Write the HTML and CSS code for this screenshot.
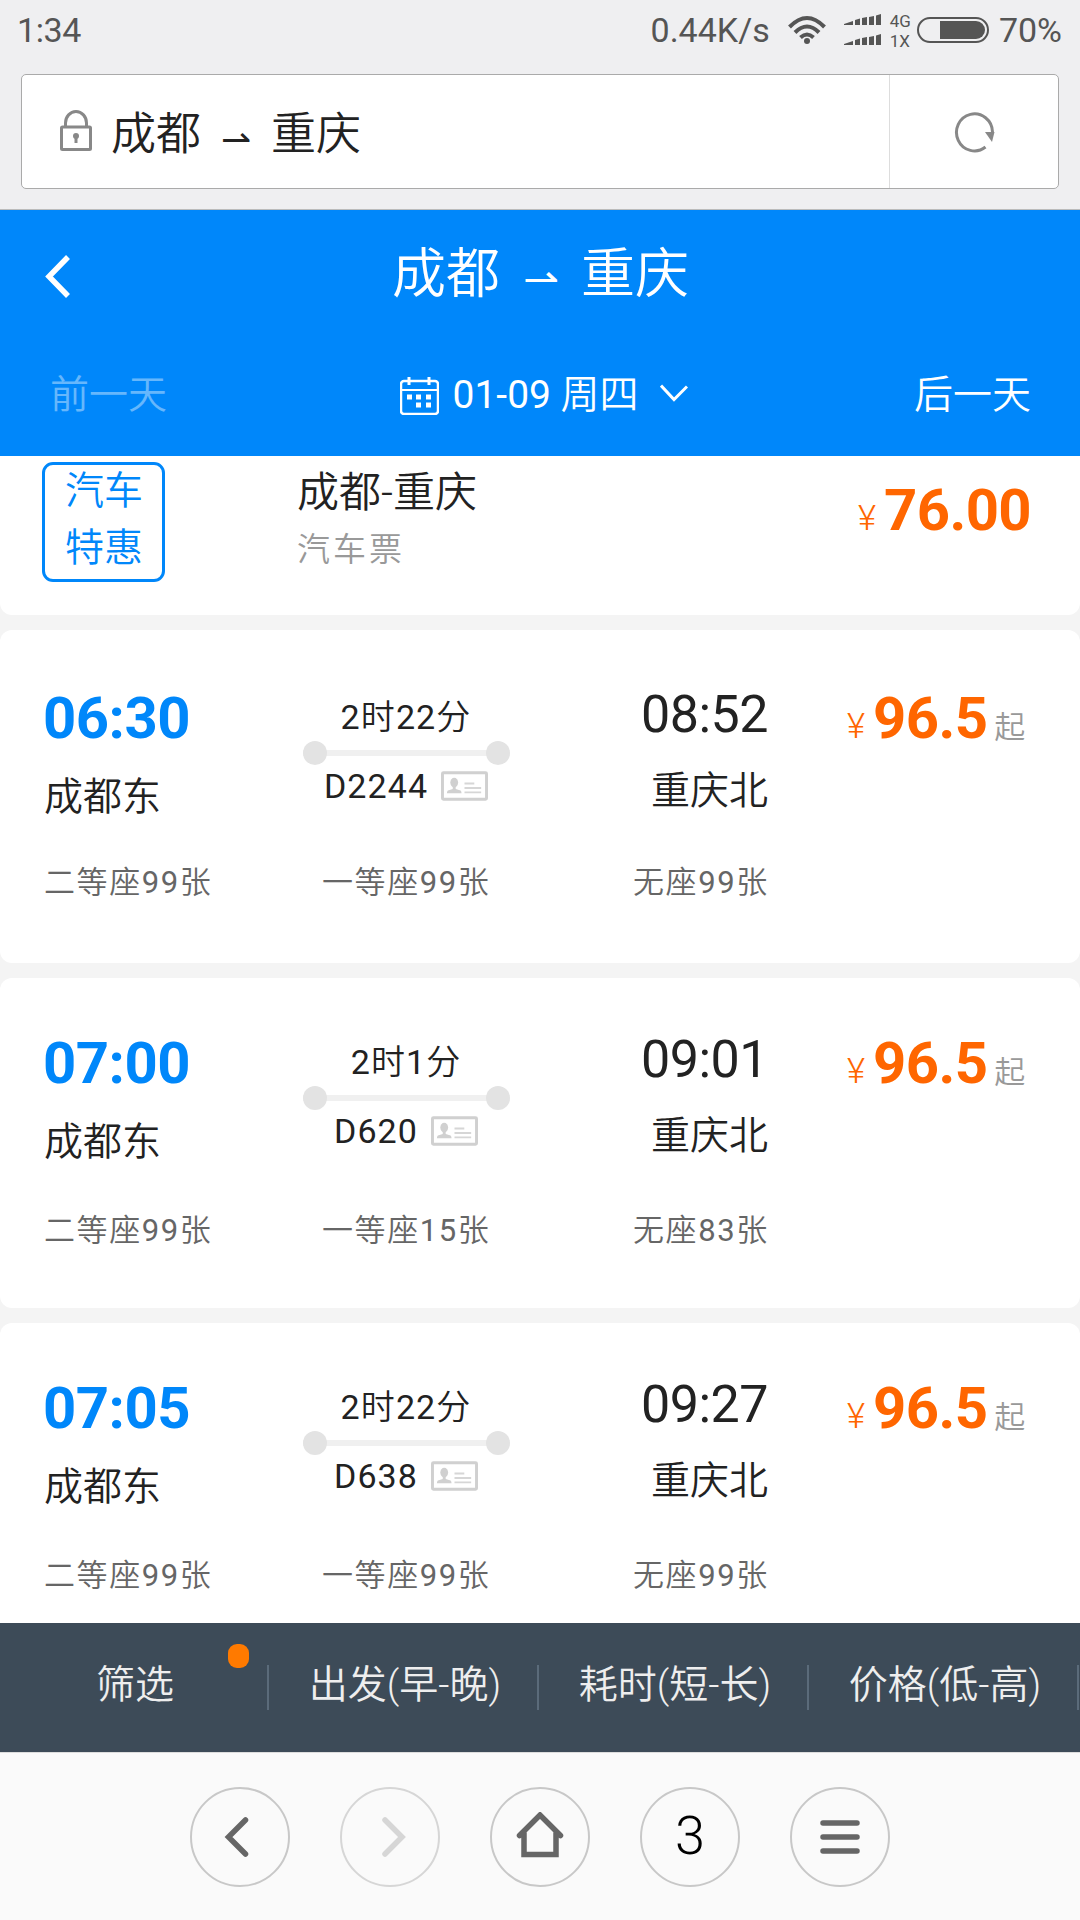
FILE: index.html
```html
<!DOCTYPE html>
<html lang="zh-CN">
<head>
  <meta charset="UTF-8" />
  <meta name="viewport" content="width=device-width, initial-scale=1" />
  <title>成都 ⇀ 重庆</title>
  <link rel="stylesheet" href="styles.css">
</head>
<body>

  <svg class="sprite" aria-hidden="true">
    <symbol id="id-card" viewBox="0 0 48 30">
      <rect x="1.5" y="1.5" width="45" height="27" rx="1" fill="#fff" stroke="#d0d0d0" stroke-width="3"/>
      <ellipse cx="13.5" cy="11.5" rx="4" ry="4.8" fill="#d0d0d0"/>
      <path d="M12 15h3v3l5 1.500q1 1 1 3H6q0-2 1-3l5-1.500z" fill="#d0d0d0"/>
      <path d="M24 12.500h10M24 17h17M24 21.500h17" stroke="#d6d6d6" stroke-width="2"/>
    </symbol>
  </svg>

  <!-- Status bar -->
  <div class="status">
    <span class="clock">1:34</span>
    <span class="speed">0.44K/s</span>
    <svg class="wifi" width="38" height="28" viewBox="0 0 38 28" fill="none" stroke="#555" stroke-width="4">
      <path d="M1.500 11Q19-7 36.500 11M7 16.500Q19 4.500 31 16.500M12.500 21.500Q19 15.500 25.500 21.500"/>
      <circle cx="19" cy="25" r="3" fill="#555" stroke="none"/>
    </svg>
    <svg class="signal" width="38" height="32" viewBox="0 0 38 32" fill="#555">
      <path d="M0 10l9-3v4H0zM11 6l5-1.500V11h-5zM18 4l5-1v8h-5zM25 3l5-1v9h-5zM32 1.500L37 0v11h-5z"/>
      <path d="M0 30l9-3v4H0zM11 26l5-1.500V31h-5zM18 24l5-1v8h-5zM25 23l5-1v9h-5zM32 21.500l5-1.500v11h-5z"/>
    </svg>
    <span class="network"><span>4G</span><span>1X</span></span>
    <span class="battery"><span class="battery-level"></span></span>
    <span class="percent">70%</span>
  </div>

  <div class="address">
    <div class="address-box">
      <div class="address-title">
        <svg class="lock" width="32" height="41" viewBox="0 0 32 41" fill="none" stroke="#888" stroke-width="3">
          <path d="M5.500 16V13a10.500 11.500 0 0 1 21 0V16"/>
          <rect x="1.500" y="17" width="29" height="22.500" rx="1"/>
          <circle cx="16" cy="26" r="3" fill="#888" stroke="none"/>
          <path d="M16 26v7"/>
        </svg>
        <span>成都</span><span class="arrow">⇀</span><span>重庆</span>
      </div>
      <div class="reload">
        <svg width="42" height="42" viewBox="0 0 42 42">
          <path d="M38.500 21A18 18.500 0 1 0 31.500 36" fill="none" stroke="#888" stroke-width="3"/>
          <path d="M31 21h9.500l-2.500 10z" fill="#888"/>
        </svg>
      </div>
    </div>
  </div>

  <header class="header">
    <div class="header-top">
      <svg class="back" width="25" height="43" viewBox="0 0 25 43" fill="none" stroke="#fff" stroke-width="5.500">
        <path d="M23 2L4 21.500 23 41"/>
      </svg>
      <h1 class="route"><span>成都</span><span class="arrow">⇀</span><span>重庆</span></h1>
    </div>
    <div class="days">
      <span class="prev-day">前一天</span>
      <div class="date">
        <svg class="calendar" width="39" height="38" viewBox="0 0 39 38" fill="none" stroke="#fff" stroke-width="2">
          <rect x="1" y="4" width="37" height="33" rx="3" stroke-width="2.500"/>
          <path d="M1 13h37"/>
          <path d="M9 0v8M29 0v8" stroke-width="3"/>
          <path d="M7 20h5M16 20h5M26 20h5M16 28h5M26 28h5" stroke-width="5"/>
        </svg>
        <span class="date-text"><span class="num">01-09</span> 周四</span>
        <svg class="chevron" width="28" height="18" viewBox="0 0 28 18" fill="none" stroke="#fff" stroke-width="3">
          <path d="M1 1.500l13 14 13-13"/>
        </svg>
      </div>
      <span class="next-day">后一天</span>
    </div>
  </header>

  <main class="list">
    <section class="card promo">
      <div class="promo-tag"><span>汽车<br>特惠</span></div>
      <div class="promo-info">
        <p class="promo-route">成都-重庆</p>
        <p class="promo-type">汽车票</p>
      </div>
      <div class="price"><span class="yen">¥</span><span class="amount">76.00</span></div>
    </section>

    <section class="card train train-first">
      <div class="train-main">
        <div class="from"><p class="time">06:30</p><p class="station">成都东</p></div>
        <div class="trip">
          <p class="duration"><span class="num">2</span>时<span class="num">22</span>分</p>
          <div class="line"><i></i><i></i></div>
          <p class="number">D2244<svg class="id-card"><use href="#id-card"/></svg></p>
        </div>
        <div class="to"><p class="time">08:52</p><p class="station">重庆北</p></div>
        <div class="price"><span class="yen">¥</span><span class="amount">96.5</span><span class="up">起</span></div>
      </div>
      <div class="seats">
        <span>二等座<b class="num">99</b>张</span>
        <span>一等座<b class="num">99</b>张</span>
        <span>无座<b class="num">99</b>张</span>
      </div>
    </section>

    <section class="card train">
      <div class="train-main">
        <div class="from"><p class="time">07:00</p><p class="station">成都东</p></div>
        <div class="trip">
          <p class="duration"><span class="num">2</span>时<span class="num">1</span>分</p>
          <div class="line"><i></i><i></i></div>
          <p class="number">D620<svg class="id-card"><use href="#id-card"/></svg></p>
        </div>
        <div class="to"><p class="time">09:01</p><p class="station">重庆北</p></div>
        <div class="price"><span class="yen">¥</span><span class="amount">96.5</span><span class="up">起</span></div>
      </div>
      <div class="seats">
        <span>二等座<b class="num">99</b>张</span>
        <span>一等座<b class="num">15</b>张</span>
        <span>无座<b class="num">83</b>张</span>
      </div>
    </section>

    <section class="card train">
      <div class="train-main">
        <div class="from"><p class="time">07:05</p><p class="station">成都东</p></div>
        <div class="trip">
          <p class="duration"><span class="num">2</span>时<span class="num">22</span>分</p>
          <div class="line"><i></i><i></i></div>
          <p class="number">D638<svg class="id-card"><use href="#id-card"/></svg></p>
        </div>
        <div class="to"><p class="time">09:27</p><p class="station">重庆北</p></div>
        <div class="price"><span class="yen">¥</span><span class="amount">96.5</span><span class="up">起</span></div>
      </div>
      <div class="seats">
        <span>二等座<b class="num">99</b>张</span>
        <span>一等座<b class="num">99</b>张</span>
        <span>无座<b class="num">99</b>张</span>
      </div>
    </section>
  </main>

  <div class="filters">
    <div class="filter">筛选<i class="dot"></i></div>
    <div class="filter">出发(早-晚)</div>
    <div class="filter">耗时(短-长)</div>
    <div class="filter">价格(低-高)</div>
  </div>

  <nav class="browser-nav">
    <a class="nav-btn">
      <svg width="50" height="50" viewBox="0 0 50 50"><path d="M30.500 8L13.500 25l17 17"/></svg>
    </a>
    <a class="nav-btn disabled">
      <svg width="50" height="50" viewBox="0 0 50 50"><path d="M20 8l17 17-17 17"/></svg>
    </a>
    <a class="nav-btn">
      <svg width="50" height="50" viewBox="0 0 50 50"><path d="M4.500 23.500L25 3l20.500 20.500M9 21v21.500h32V21"/></svg>
    </a>
    <a class="nav-btn tabs">3</a>
    <a class="nav-btn">
      <svg width="50" height="50" viewBox="0 0 50 50"><path d="M8 11h34M8 25h34M8 39h34"/></svg>
    </a>
  </nav>

</body>
</html>
```

FILE: styles.css
```css
* {
  margin: 0;
  padding: 0;
  box-sizing: border-box;
}

body {
  font-family: Roboto, "Noto Sans CJK SC", sans-serif;
  font-weight: 350;
  width: 1080px;
  height: 1920px;
  overflow: hidden;
  display: flex;
  flex-direction: column;
  background: #f4f4f4;
  color: #222;
  white-space: nowrap;
}

svg {
  display: block;
  flex: none;
}

.sprite {
  position: absolute;
  width: 0;
  height: 0;
}

.num {
  font-weight: 400;
}

/* Status bar */
.status {
  height: 74px;
  flex: none;
  display: flex;
  align-items: flex-start;
  padding: 0 18px 0 17px;
  background: #efeff1;
  color: #555;
  font-size: 34px;
  font-weight: 400;
  line-height: 61px;
}

.clock {
  letter-spacing: -.4px;
}

.speed {
  margin-left: auto;
}

.wifi {
  margin: 16px 18px 0 18px;
}

.signal {
  margin-top: 14px;
}

.network {
  display: flex;
  flex-direction: column;
  margin: 11px 6px 0 8px;
  font-size: 17px;
  line-height: 20px;
}

.battery {
  width: 72px;
  height: 26px;
  margin: 17px 10px 0 0;
  padding: 2px;
  border: 2px solid #555;
  border-radius: 13px;
  display: flex;
  justify-content: flex-end;
}

.battery-level {
  width: 45px;
  background: #555;
  border-radius: 0 9px 9px 0;
}

/* Address bar */
.address {
  height: 136px;
  flex: none;
  padding: 0 21px;
  background: #efeff1;
  border-bottom: 1px solid #bbb;
}

.address-box {
  height: 115px;
  display: flex;
  background: #fff;
  border: 1px solid #aaa;
  border-radius: 5px;
}

.address-title {
  flex: 1;
  display: flex;
  align-items: center;
  padding: 0 0 2px 38px;
  font-size: 45px;
}

.lock {
  margin-right: 19px;
}

.arrow {
  text-align: center;
}

.address-title .arrow {
  width: 70px;
  padding-top: 18px;
  font-size: 36px;
  font-weight: 300;
}

.reload {
  width: 169px;
  display: flex;
  align-items: center;
  justify-content: center;
  padding-left: 2px;
  border-left: 1px solid #ddd;
}

/* Blue header */
.header {
  height: 246px;
  flex: none;
  background: #0087fa;
  color: #fff;
}

.header-top {
  height: 132px;
  display: flex;
  align-items: center;
  padding-left: 45px;
}

.route {
  flex: 1;
  display: flex;
  align-items: center;
  justify-content: center;
  margin-right: 69px;
  padding-bottom: 14px;
  font-size: 54px;
  font-weight: 350;
}

.route .arrow {
  width: 81px;
  padding-top: 20px;
  font-size: 43px;
  font-weight: 300;
}

.days {
  height: 98px;
  display: flex;
  align-items: center;
  justify-content: space-between;
  padding: 0 49px 0 50px;
  font-size: 39px;
}

.prev-day {
  opacity: .4;
}

.date {
  display: flex;
  align-items: center;
  margin-left: 7px;
}

.calendar {
  margin-top: 10px;
}

.chevron {
  margin-top: 4px;
}

.date-text {
  margin: 0 22px 0 14px;
}

/* List */
.list {
  flex: 1;
  min-height: 0;
  overflow: hidden;
  display: flex;
  flex-direction: column;
  gap: 15px;
}

.card {
  flex: none;
  background: #fff;
  border-radius: 12px;
}

.promo {
  height: 159px;
  display: flex;
  align-items: flex-start;
  padding: 6px 49px 0 42px;
  border-radius: 0 0 12px 12px;
}

.promo-tag {
  width: 123px;
  height: 120px;
  border: 3px solid #0087fa;
  border-radius: 11px;
  color: #0087fa;
  font-size: 39px;
  line-height: 57px;
  text-align: center;
}

.promo-tag span {
  display: block;
  margin: -2px 0 0 1px;
}

.promo-info {
  margin: 1px 0 0 132px;
}

.promo-route {
  font-size: 42px;
  line-height: 60px;
}

.promo-type {
  font-size: 33px;
  line-height: 54px;
  letter-spacing: 3px;
  color: #999;
}

.price {
  color: #ff6600;
  display: flex;
  align-items: baseline;
  line-height: 70px;
}

.promo .price {
  margin: 13px 0 0 auto;
}

.yen {
  font-size: 35px;
  font-weight: 350;
  margin-right: 8px;
}

.amount {
  font-size: 58px;
  font-weight: 700;
  letter-spacing: -.6px;
}

.up {
  margin-left: 7px;
  font-size: 31px;
  color: #999;
}

.train {
  height: 330px;
  padding: 50px 0 0 44px;
}

.train-first {
  height: 333px;
  padding-top: 53px;
}

.train-main {
  height: 181px;
  display: grid;
  grid-template-columns: 259px 207px 258px 1fr;
}

.train-first .train-main {
  height: 178px;
}

.time {
  font-size: 52px;
  line-height: 63px;
  font-weight: 400;
  letter-spacing: -.5px;
}

.from .time {
  margin-left: -1px;
  font-size: 58px;
  line-height: 70px;
  font-weight: 700;
  letter-spacing: -.5px;
  color: #0087fa;
}

.station {
  font-size: 39px;
  line-height: 60px;
}

.from .station {
  margin-top: 14px;
}

.to {
  text-align: right;
}

.to .station {
  margin-top: 15px;
}

.trip {
  font-size: 34px;
  letter-spacing: 1.1px;
  text-align: center;
}

.duration {
  margin: 14px 1px 0 0;
  line-height: 40px;
}

.line {
  height: 24px;
  margin-top: 4px;
  display: flex;
  justify-content: space-between;
  background: linear-gradient(#f0f0f0, #f0f0f0) center / 100% 6px no-repeat;
}

.line i {
  width: 24px;
  height: 24px;
  border-radius: 50%;
  background: #e3e3e3;
}

.number {
  display: flex;
  justify-content: center;
  align-items: center;
  margin-right: 1px;
  line-height: 42px;
  font-weight: 400;
}

.id-card {
  width: 47px;
  height: 30px;
  margin-left: 13px;
}

.train-main .price {
  margin-left: 79px;
}

.seats {
  display: grid;
  grid-template-columns: 278px 311px 1fr;
  font-size: 31px;
  line-height: 44px;
  letter-spacing: 1.6px;
  color: #666;
}

/* Filter bar */
.filters {
  height: 129px;
  flex: none;
  display: flex;
  background: #3d4b58;
  color: #eee;
  font-size: 39px;
}

.filter {
  position: relative;
  width: 270px;
  line-height: 124px;
  text-align: center;
  background: linear-gradient(#5b6b7a, #5b6b7a) right 1px top 42px / 2px 45px no-repeat;
}

.dot {
  position: absolute;
  top: 21px;
  right: 21px;
  width: 21px;
  height: 24px;
  border-radius: 9px;
  background: #ff7a00;
}

/* Browser buttons */
.browser-nav {
  height: 168px;
  flex: none;
  display: flex;
  justify-content: center;
  gap: 50px;
  padding-top: 34px;
  background: #fafafa;
  border-top: 1px solid #ddd;
}

.nav-btn {
  width: 100px;
  height: 100px;
  display: flex;
  align-items: center;
  justify-content: center;
  border: 2px solid #c8c8c8;
  border-radius: 50%;
}

.nav-btn svg {
  fill: none;
  stroke: #666;
  stroke-width: 5.5;
  stroke-linecap: round;
}

.disabled {
  border-color: #d6d6d6;
}

.disabled svg {
  stroke: #d6d6d6;
}

.tabs {
  padding-bottom: 4px;
  font-size: 54px;
  font-weight: 350;
  color: #000;
}
```
